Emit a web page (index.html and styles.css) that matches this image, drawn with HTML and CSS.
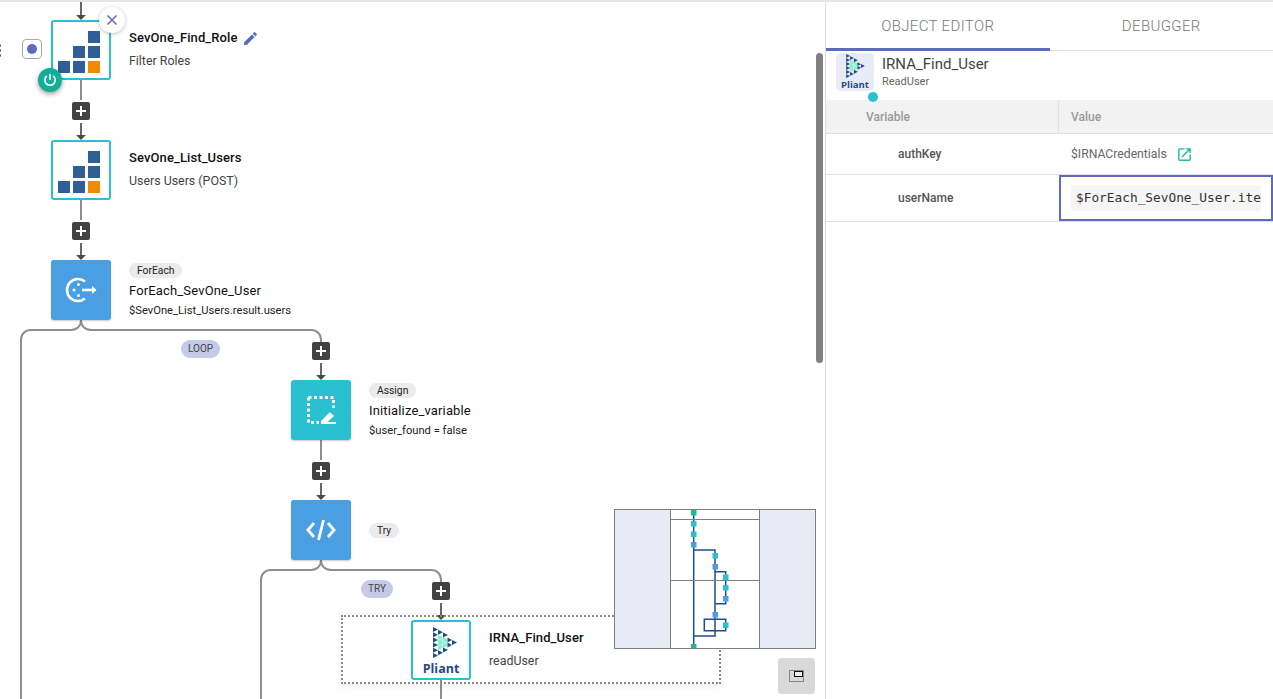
FILE: index.html
```html
<!DOCTYPE html>
<html>
<head>
    <title>Workflow Editor</title>
    <link rel="stylesheet" href="styles.css">
</head>
<body>
    <div class="topLine"></div>

    <!-- shared logo drawings -->
    <svg class="defs" width="0" height="0">
        <symbol id="pliantMark" viewBox="0 0 24 31">
            <path d="M5 8L14 12V19L5 23Z" fill="#7df2c4"/>
            <path d="M5 12L14 15.5M5 19L14 15.5M9.5 10V21" stroke="#d8fbed" stroke-width="0.8"/>
            <g fill="#1f4a86">
                <path d="M0 0L5 2.5L0 5Z"/>
                <path d="M0 5.2L5 7.7L0 10.2Z"/>
                <path d="M0 10.4L5 12.9L0 15.4Z"/>
                <path d="M0 15.6L5 18.1L0 20.6Z"/>
                <path d="M0 20.8L5 23.3L0 25.8Z"/>
                <path d="M0 26L5 28.5L0 31Z"/>
                <path d="M5 2.8L10 5.3L5 7.8Z"/>
                <path d="M5 23.2L10 25.7L5 28.2Z"/>
                <path d="M10 5.6L15 8.1L10 10.6Z"/>
                <path d="M10 20.4L15 22.9L10 25.4Z"/>
                <path d="M14.5 10.6L19 13.1L14.5 15.6Z"/>
                <path d="M14.5 15.4L19 17.9L14.5 20.4Z"/>
                <path d="M19 13L24 15.5L19 18Z"/>
            </g>
        </symbol>
        <symbol id="sevMark" viewBox="0 0 60 60">
            <rect x="7" y="41" width="12" height="12" fill="#2f5f97"/>
            <rect x="22" y="41" width="12" height="12" fill="#2f5f97"/>
            <rect x="37" y="41" width="12" height="12" fill="#ef8c00"/>
            <rect x="22" y="26" width="12" height="12" fill="#2f5f97"/>
            <rect x="37" y="26" width="12" height="12" fill="#2f5f97"/>
            <rect x="37" y="11" width="12" height="12" fill="#2f5f97"/>
        </symbol>
    </svg>

    <div class="app">
        <div class="canvas">
            <!-- connectors between the nodes -->
            <svg class="edges" width="825" height="699">
                <g class="edge">
                    <path d="M81 80V100"/>
                    <path d="M81 200V220"/>
                    <path d="M81 320C81 326 77 330 71 330H31C25 330 21 334 21 340V699"/>
                    <path d="M81 320C81 326 85 330 91 330H311C317 330 321 334 321 340V342"/>
                    <path d="M321 440V460"/>
                    <path d="M321 560C321 566 317 570 311 570H271C265 570 261 574 261 580V699"/>
                    <path d="M321 560C321 566 325 570 331 570H431C437 570 441 574 441 580V582"/>
                    <path d="M441 680V699"/>
                </g>
                <g class="edgeIn">
                    <path d="M81 0V15"/>
                    <path d="M81 123V135"/>
                    <path d="M81 243V255"/>
                    <path d="M321 363V375"/>
                    <path d="M321 483V495"/>
                    <path d="M441 603V615"/>
                </g>
                <g class="arrow">
                    <path d="M76 15H86L81 20Z"/>
                    <path d="M76 135H86L81 140Z"/>
                    <path d="M76 255H86L81 260Z"/>
                    <path d="M316 375H326L321 380Z"/>
                    <path d="M316 495H326L321 500Z"/>
                    <path d="M436 615H446L441 620Z"/>
                </g>
            </svg>

            <div class="dragDots"></div>
            <div class="radioBox"><span></span></div>

            <span class="addButton add1"></span>
            <span class="addButton add2"></span>
            <span class="addButton add3"></span>
            <span class="addButton add4"></span>
            <span class="addButton add5"></span>

            <span class="branchLabel loopLabel">LOOP</span>
            <span class="branchLabel tryLabel">TRY</span>

            <div class="selectedArea"></div>

            <div class="node nodeFindRole">
                <div class="nodeBox outlined">
                    <svg class="sevIcon" width="60" height="60"><use href="#sevMark"/></svg>
                    <span class="closeButton">
                        <svg width="12" height="12" viewBox="0 0 12 12"><path d="M1.5 1.5L10.5 10.5M10.5 1.5L1.5 10.5"/></svg>
                    </span>
                    <span class="powerButton">
                        <svg width="14" height="14" viewBox="0 0 14 14"><path d="M7 1V7M3.8 3A5.2 5.2 0 1 0 10.2 3"/></svg>
                    </span>
                </div>
                <div class="nodeText">
                    <div class="nodeName bold">SevOne_Find_Role
                        <svg class="editIcon" width="17" height="17" viewBox="0 0 24 24"><path d="M3 17.25V21h3.75L17.81 9.94l-3.75-3.75L3 17.25zM20.71 7.04c.39-.39.39-1.02 0-1.41l-2.34-2.34c-.39-.39-1.02-.39-1.41 0l-1.83 1.83 3.75 3.75 1.83-1.83z"/></svg>
                    </div>
                    <div class="nodeSub">Filter Roles</div>
                </div>
            </div>

            <div class="node nodeListUsers">
                <div class="nodeBox outlined">
                    <svg class="sevIcon" width="60" height="60"><use href="#sevMark"/></svg>
                </div>
                <div class="nodeText">
                    <div class="nodeName bold">SevOne_List_Users</div>
                    <div class="nodeSub">Users Users (POST)</div>
                </div>
            </div>

            <div class="node nodeForEach">
                <div class="nodeBox blue">
                    <svg width="32" height="28" viewBox="0 0 32 28">
                        <path class="iconLine" d="M20 5.5A11 11 0 1 0 20 22.5"/>
                        <circle cx="13.5" cy="8.5" r="1.5" fill="#fff"/>
                        <circle cx="9" cy="14" r="1.5" fill="#fff"/>
                        <circle cx="13.5" cy="19.5" r="1.5" fill="#fff"/>
                        <path class="iconLine" d="M17 14H28"/>
                        <path d="M27 10L31.5 14L27 18Z" fill="#fff"/>
                    </svg>
                </div>
                <div class="nodeText">
                    <span class="typeTag">ForEach</span>
                    <div class="nodeName">ForEach_SevOne_User</div>
                    <div class="nodeSub small">$SevOne_List_Users.result.users</div>
                </div>
            </div>

            <div class="node nodeAssign">
                <div class="nodeBox teal">
                    <svg width="30" height="30" viewBox="0 0 30 30">
                        <path d="M2.5 2.5H27.5V13M2.5 2.5V27.5H13" fill="none" stroke="#fff" stroke-width="3" stroke-dasharray="3 2.5"/>
                        <path d="M15 26L24 17L28 21L19.5 29H15ZM21.5 27H30V29H19.5Z" fill="#fff"/>
                    </svg>
                </div>
                <div class="nodeText">
                    <span class="typeTag">Assign</span>
                    <div class="nodeName">Initialize_variable</div>
                    <div class="nodeSub small">$user_found = false</div>
                </div>
            </div>

            <div class="node nodeTry">
                <div class="nodeBox blue">
                    <svg width="30" height="24" viewBox="0 0 30 24">
                        <path class="iconLine thick" d="M8 5L2 12L8 19M22 5L28 12L22 19M17.5 2L12.5 22"/>
                    </svg>
                </div>
                <div class="nodeText">
                    <span class="typeTag">Try</span>
                </div>
            </div>

            <div class="node nodeFindUser">
                <div class="nodeBox outlined pliantBox">
                    <svg class="pliantLogo" width="24" height="31"><use href="#pliantMark"/></svg>
                    <span class="pliantWord">Pliant</span>
                </div>
                <div class="nodeText">
                    <div class="nodeName bold">IRNA_Find_User</div>
                    <div class="nodeSub">readUser</div>
                </div>
            </div>

            <!-- minimap -->
            <svg class="minimap" width="202" height="140" viewBox="614 509 202 140">
                <rect x="614.5" y="509.5" width="201" height="139" fill="#fff"/>
                <rect x="614.5" y="509.5" width="56" height="139" fill="#e8eaf6"/>
                <rect x="759.5" y="509.5" width="56" height="139" fill="#e8eaf6"/>
                <g class="miniLines">
                    <path d="M693.7 513V646M693.7 550H715V636H693.7M715 571.7H725.7V603.7H715M704.3 619.3H725.7V630.7H704.3Z"/>
                </g>
                <g fill="#29c0d2">
                    <rect x="691" y="521" width="5.5" height="5.5"/>
                    <rect x="691" y="531.5" width="5.5" height="5.5"/>
                    <rect x="712.5" y="553" width="5.5" height="5.5"/>
                    <rect x="723" y="574.5" width="5.5" height="5.5"/>
                    <rect x="723" y="585" width="5.5" height="5.5"/>
                    <rect x="723" y="622.5" width="5.5" height="5.5"/>
                </g>
                <g fill="#4a9fe3">
                    <rect x="691" y="542" width="5.5" height="5.5"/>
                    <rect x="712.5" y="564" width="5.5" height="5.5"/>
                    <rect x="723" y="596" width="5.5" height="5.5"/>
                    <rect x="712.5" y="612" width="5.5" height="5.5"/>
                </g>
                <g fill="#1fb89f">
                    <rect x="691" y="510" width="5.5" height="5.5"/>
                    <rect x="691" y="644" width="5.5" height="4"/>
                </g>
                <g class="miniFrame">
                    <rect x="614.5" y="509.5" width="201" height="139"/>
                    <path d="M670.5 509.5V648.5M759.5 509.5V648.5M670.5 519.5H759.5M670.5 580.5H759.5"/>
                </g>
            </svg>

            <div class="miniToggle">
                <svg width="16" height="14" viewBox="0 0 16 14">
                    <rect x="0.5" y="1.5" width="14" height="11" fill="none" stroke="#333" stroke-dasharray="1 1"/>
                    <rect x="5.5" y="2.5" width="8" height="5" fill="#eee" stroke="#111"/>
                </svg>
            </div>

            <div class="scrollThumb"></div>
        </div>

        <div class="panel">
            <div class="tabs">
                <div class="tab active">OBJECT EDITOR</div>
                <div class="tab">DEBUGGER</div>
            </div>
            <div class="objectHeader">
                <div class="objectIcon">
                    <svg width="19" height="24"><use href="#pliantMark"/></svg>
                    <span class="objectIconWord">Pliant</span>
                    <span class="objectDot"></span>
                </div>
                <div>
                    <div class="objectName">IRNA_Find_User</div>
                    <div class="objectType">ReadUser</div>
                </div>
            </div>
            <div class="varTable">
                <div class="varRow varHead">
                    <div class="varCell nameHead">Variable</div>
                    <div class="varCell valueHead">Value</div>
                </div>
                <div class="varRow">
                    <div class="varCell varName">authKey</div>
                    <div class="varCell varValue">$IRNACredentials
                        <svg class="openIcon" width="17" height="17" viewBox="0 0 24 24"><path d="M19 19H5V5h7V3H5c-1.11 0-2 .9-2 2v14c0 1.1.89 2 2 2h14c1.1 0 2-.9 2-2v-7h-2v7zM14 3v2h3.59l-9.83 9.83 1.41 1.41L19 6.41V10h2V3h-7z"/></svg>
                    </div>
                </div>
                <div class="varRow editRow">
                    <div class="varCell varName">userName</div>
                    <div class="varCell editCell"><code class="codeValue">$ForEach_SevOne_User.ite</code></div>
                </div>
            </div>
        </div>
    </div>
</body>
</html>
```

FILE: styles.css
```css
html, body {
    margin: 0;
    height: 100%;
    overflow: hidden;
    background: #fff;
    font-family: Roboto, "Liberation Sans", sans-serif;
    color: #222;
}
.topLine {
    position: absolute;
    top: 0;
    left: 0;
    right: 0;
    height: 2px;
    background: #e6e6e6;
    z-index: 5;
}
.defs {
    position: absolute;
}
.app {
    display: flex;
    height: 699px;
}

/* canvas */
.canvas {
    position: relative;
    flex: 0 0 825px;
    height: 699px;
    overflow: hidden;
    border-right: 1px solid #dcdcdc;
}
.edges {
    position: absolute;
    top: 0;
    left: 0;
}
.edge path {
    fill: none;
    stroke: #8e8e8e;
    stroke-width: 2;
}
.edgeIn path {
    fill: none;
    stroke: #666;
    stroke-width: 2;
}
.arrow path {
    fill: #4a4a4a;
}
.dragDots {
    position: absolute;
    left: -2px;
    top: 44px;
    width: 3px;
    height: 3px;
    border-radius: 50%;
    background: #555;
    box-shadow: 0 5px 0 #555, 0 10px 0 #555;
}
.radioBox {
    position: absolute;
    left: 22px;
    top: 39px;
    width: 18px;
    height: 18px;
    border: 1px solid #aaa;
    border-radius: 4px;
    display: flex;
    align-items: center;
    justify-content: center;
}
.radioBox span {
    width: 10px;
    height: 10px;
    border-radius: 50%;
    background: #5c6bc0;
}
.addButton {
    position: absolute;
    width: 18px;
    height: 18px;
    background: #424242;
    border-radius: 2px;
}
.addButton::before, .addButton::after {
    content: "";
    position: absolute;
    background: #fff;
}
.addButton::before {
    left: 4px;
    top: 8px;
    width: 10px;
    height: 2px;
}
.addButton::after {
    left: 8px;
    top: 4px;
    width: 2px;
    height: 10px;
}
.add1 { left: 72px; top: 102px; }
.add2 { left: 72px; top: 222px; }
.add3 { left: 312px; top: 342px; }
.add4 { left: 312px; top: 462px; }
.add5 { left: 432px; top: 582px; }

.branchLabel {
    position: absolute;
    height: 18px;
    line-height: 18px;
    padding: 0 7px;
    border-radius: 9px;
    background: #c5cae9;
    color: #444;
    font-size: 10px;
}
.loopLabel { left: 181px; top: 340px; }
.tryLabel { left: 361px; top: 580px; }

.selectedArea {
    position: absolute;
    left: 341px;
    top: 615px;
    width: 376px;
    height: 65px;
    border: 2px dotted #8a8a8a;
    box-shadow: 0 2px 8px rgba(0, 0, 0, 0.08);
}

/* nodes */
.node {
    position: absolute;
    display: flex;
    gap: 18px;
}
.nodeFindRole { left: 51px; top: 20px; }
.nodeListUsers { left: 51px; top: 140px; }
.nodeForEach { left: 51px; top: 260px; }
.nodeAssign { left: 291px; top: 380px; }
.nodeTry { left: 291px; top: 500px; }
.nodeFindUser { left: 411px; top: 620px; }

.nodeBox {
    position: relative;
    box-sizing: border-box;
    width: 60px;
    height: 60px;
    border-radius: 3px;
    display: flex;
    align-items: center;
    justify-content: center;
    box-shadow: 0 1px 2px rgba(0, 0, 0, 0.2);
    flex: none;
}
.outlined {
    background: #fff;
    border: 2px solid #29c0d2;
    box-shadow: none;
}
.sevIcon {
    position: absolute;
    left: -2px;
    top: -2px;
}
.blue { background: #4a9fe3; }
.teal { background: #29c0d2; }
.iconLine {
    fill: none;
    stroke: #fff;
    stroke-width: 2.6;
}
.iconLine.thick {
    stroke-width: 2.8;
}
.pliantBox {
    flex-direction: column;
    justify-content: flex-start;
    padding-top: 5px;
}
.pliantLogo {
    margin-left: 8px;
}
.pliantWord {
    font-family: "Open Sans", sans-serif;
    font-weight: 700;
    font-size: 12.5px;
    line-height: 15px;
    color: #1f4a86;
    margin-top: 3px;
}
.closeButton {
    position: absolute;
    left: 46px;
    top: -15px;
    width: 26px;
    height: 26px;
    border-radius: 50%;
    background: #fff;
    box-shadow: 0 1px 4px rgba(0, 0, 0, 0.25);
    display: flex;
    align-items: center;
    justify-content: center;
}
.closeButton path {
    stroke: #5c6bc0;
    stroke-width: 1.5;
    fill: none;
}
.powerButton {
    position: absolute;
    left: -15px;
    top: 46px;
    width: 24px;
    height: 24px;
    border-radius: 50%;
    background: #13ae97;
    box-shadow: 0 2px 5px rgba(0, 0, 0, 0.4);
    display: flex;
    align-items: center;
    justify-content: center;
}
.powerButton path {
    stroke: #fff;
    stroke-width: 1.6;
    fill: none;
}
.nodeText {
    display: flex;
    flex-direction: column;
    align-items: flex-start;
    justify-content: center;
    height: 60px;
}
.typeTag {
    height: 15px;
    line-height: 15px;
    padding: 0 8px;
    border-radius: 8px;
    background: #ebebeb;
    font-size: 10.3px;
    color: #222;
}
.nodeName {
    font-size: 13px;
    line-height: 14px;
    margin-top: 6px;
    letter-spacing: 0.15px;
    white-space: nowrap;
    color: #111;
    display: flex;
    align-items: center;
    gap: 5px;
}
.bold {
    font-weight: 500;
    letter-spacing: 0.1px;
    margin-top: -1px;
    margin-bottom: 9px;
}
.nodeSub {
    font-size: 12.4px;
    line-height: 14px;
    color: #444;
    white-space: nowrap;
}
.nodeSub.small {
    font-size: 11.2px;
    margin-top: 6px;
    color: #222;
}
.editIcon {
    fill: #5c6bc0;
    margin: -2px 0;
}

/* minimap */
.minimap {
    position: absolute;
    left: 614px;
    top: 509px;
}
.miniLines path {
    fill: none;
    stroke: #1f4e8c;
    stroke-width: 1.5;
}
.miniFrame rect, .miniFrame path {
    fill: none;
    stroke: #7f7f7f;
    stroke-width: 1;
}
.miniToggle {
    position: absolute;
    left: 778px;
    top: 658px;
    width: 37px;
    height: 36px;
    background: #d9d9d9;
    border-radius: 4px;
    display: flex;
    align-items: center;
    justify-content: center;
}
.scrollThumb {
    position: absolute;
    left: 816px;
    top: 53px;
    width: 7px;
    height: 310px;
    background: #808080;
    border-radius: 4px;
}

/* right panel */
.panel {
    flex: 1;
    min-width: 0;
    padding-top: 2px;
}
.tabs {
    display: flex;
    height: 48px;
    border-bottom: 1px solid #e0e0e0;
}
.tab {
    flex: 1;
    text-align: center;
    line-height: 48px;
    font-size: 15px;
    font-weight: 300;
    letter-spacing: 0.35px;
    color: #777;
}
.tab.active {
    height: 46px;
    border-bottom: 3px solid #5c6bc0;
}
.objectHeader {
    display: flex;
    gap: 8px;
    height: 49px;
    padding: 2px 0 0 10px;
    box-sizing: border-box;
}
.objectIcon {
    position: relative;
    width: 38px;
    height: 38px;
    border-radius: 5px;
    background: #e8eaf6;
    display: flex;
    flex-direction: column;
    align-items: center;
    padding-top: 1px;
    box-sizing: border-box;
}
.objectIconWord {
    font-family: "Open Sans", sans-serif;
    font-weight: 700;
    font-size: 9.5px;
    line-height: 11px;
    color: #1f4a86;
    margin-top: 1px;
}
.objectDot {
    position: absolute;
    left: 32px;
    top: 39px;
    width: 10px;
    height: 10px;
    border-radius: 50%;
    background: #29c0d2;
}
.objectName {
    font-size: 15px;
    line-height: 20px;
    margin-top: 1px;
    color: #444;
}
.objectType {
    font-size: 11px;
    line-height: 14px;
    margin-top: 1px;
    color: #666;
}
.varRow {
    display: flex;
    height: 40px;
    border-bottom: 1px solid #e0e0e0;
}
.varHead {
    height: 33px;
    background: #f2f2f2;
}
.varCell {
    display: flex;
    align-items: center;
    box-sizing: border-box;
    font-size: 12px;
}
.varCell:first-child {
    flex: 0 0 233px;
}
.nameHead {
    padding-left: 40px;
    color: #999;
    font-weight: 500;
    border-right: 1px solid #e0e0e0;
}
.valueHead {
    padding-left: 12px;
    color: #999;
    font-weight: 500;
}
.varName {
    padding-left: 72px;
    font-weight: 500;
    color: #555;
}
.varValue {
    padding-left: 12px;
    color: #666;
    font-size: 12.2px;
    gap: 9px;
}
.openIcon {
    fill: #1abc9c;
}
.editRow {
    height: 46px;
}
.editCell {
    flex: 1;
    height: 46px;
    padding: 0 10px;
    border: 2px solid #5c6bc0;
    min-width: 0;
}
.codeValue {
    flex: 1;
    height: 26px;
    line-height: 26px;
    padding-left: 5px;
    border-radius: 3px;
    background: #f5f5f5;
    font-family: "DejaVu Sans Mono", monospace;
    font-size: 12.8px;
    color: #333;
    overflow: hidden;
    white-space: nowrap;
}
```
